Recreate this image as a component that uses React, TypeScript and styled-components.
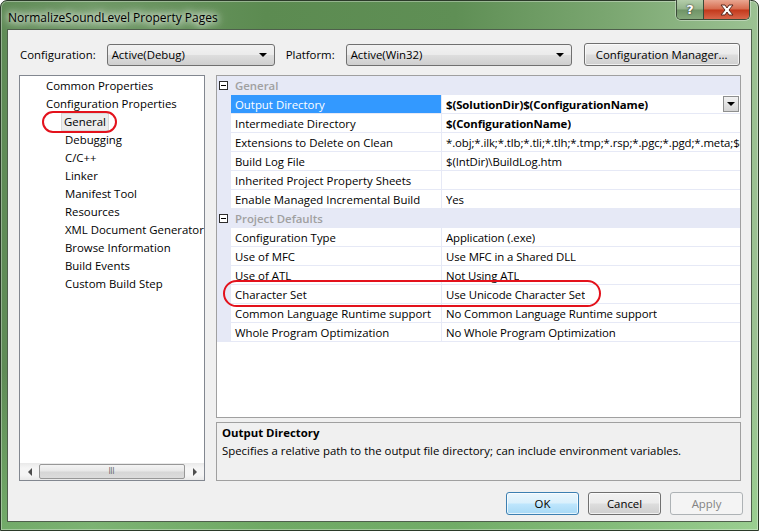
import React from 'react'
import styled, { createGlobalStyle } from 'styled-components'

const GlobalStyle = createGlobalStyle`
  body {
    margin: 0;
    background: #ffffff;
    font-family: "Open Sans", "Noto Sans", sans-serif;
    font-size: 11.4px;
    color: #000;
  }
`

const treeItems: { label: string; level: number; selected?: boolean }[] = [
  { label: 'Common Properties', level: 0 },
  { label: 'Configuration Properties', level: 0 },
  { label: 'General', level: 1, selected: true },
  { label: 'Debugging', level: 1 },
  { label: 'C/C++', level: 1 },
  { label: 'Linker', level: 1 },
  { label: 'Manifest Tool', level: 1 },
  { label: 'Resources', level: 1 },
  { label: 'XML Document Generator', level: 1 },
  { label: 'Browse Information', level: 1 },
  { label: 'Build Events', level: 1 },
  { label: 'Custom Build Step', level: 1 },
]

type Prop = { name: string; value: string; bold?: boolean; selected?: boolean }

const groups: { title: string; props: Prop[] }[] = [
  {
    title: 'General',
    props: [
      { name: 'Output Directory', value: '$(SolutionDir)$(ConfigurationName)', bold: true, selected: true },
      { name: 'Intermediate Directory', value: '$(ConfigurationName)', bold: true },
      { name: 'Extensions to Delete on Clean', value: '*.obj;*.ilk;*.tlb;*.tli;*.tlh;*.tmp;*.rsp;*.pgc;*.pgd;*.meta;$(' },
      { name: 'Build Log File', value: '$(IntDir)\\BuildLog.htm' },
      { name: 'Inherited Project Property Sheets', value: '' },
      { name: 'Enable Managed Incremental Build', value: 'Yes' },
    ],
  },
  {
    title: 'Project Defaults',
    props: [
      { name: 'Configuration Type', value: 'Application (.exe)' },
      { name: 'Use of MFC', value: 'Use MFC in a Shared DLL' },
      { name: 'Use of ATL', value: 'Not Using ATL' },
      { name: 'Character Set', value: 'Use Unicode Character Set' },
      { name: 'Common Language Runtime support', value: 'No Common Language Runtime support' },
      { name: 'Whole Program Optimization', value: 'No Whole Program Optimization' },
    ],
  },
]

function App() {
  return (
    <>
      <GlobalStyle />
      <Window>
        <TitleBar>
          <Title>NormalizeSoundLevel Property Pages</Title>
          <CaptionButtons>
            <CaptionButton kind="help">?</CaptionButton>
            <CaptionButton kind="close">
              <svg width="16" height="12" viewBox="0 0 16 12">
                <path d="M2 1 H6 L8 4 L10 1 H14 L10 6 L14 11 H10 L8 8 L6 11 H2 L6 6 Z" fill="#fff" stroke="#5a2a20" strokeWidth="1" />
              </svg>
            </CaptionButton>
          </CaptionButtons>
        </TitleBar>

        <Client>
          <Toolbar>
            <Label>Configuration:</Label>
            <Combo width={168}>
              Active(Debug)
              <Arrow />
            </Combo>
            <Label gap={11}>Platform:</Label>
            <Combo width={226}>
              Active(Win32)
              <Arrow />
            </Combo>
            <ManagerButton width={156}>Configuration Manager...</ManagerButton>
          </Toolbar>

          <Main>
            <Tree>
              <TreeList>
                {treeItems.map((item) => (
                  <TreeItem key={item.label} level={item.level}>
                    <TreeText selected={item.selected}>{item.label}</TreeText>
                  </TreeItem>
                ))}
              </TreeList>
              <HScroll>
                <ScrollArrow dir="left" />
                <Thumb>
                  <Grip>III</Grip>
                </Thumb>
                <ScrollArrow dir="right" />
              </HScroll>
              <Mark left={22} top={35} w={75} h={22} />
            </Tree>

            <RightColumn>
              <Grid>
                {groups.map((g) => (
                  <React.Fragment key={g.title}>
                    <CategoryRow>
                      <Gutter>
                        <MinusBox />
                      </Gutter>
                      <CategoryText>{g.title}</CategoryText>
                    </CategoryRow>
                    {g.props.map((p) => (
                      <PropRow key={p.name}>
                        <Gutter />
                        <NameCell selected={p.selected}>{p.name}</NameCell>
                        <ValueCell bold={p.bold}>
                          <ValueText>{p.value}</ValueText>
                          {p.selected && (
                            <DropButton>
                              <Arrow />
                            </DropButton>
                          )}
                        </ValueCell>
                      </PropRow>
                    ))}
                  </React.Fragment>
                ))}
                <Mark left={6} top={204} w={378} h={27} />
              </Grid>
              <Description>
                <DescTitle>Output Directory</DescTitle>
                <DescText>Specifies a relative path to the output file directory; can include environment variables.</DescText>
              </Description>
            </RightColumn>
          </Main>

          <ButtonRow>
            <PushButton width={73} variant="default">OK</PushButton>
            <PushButton width={73}>Cancel</PushButton>
            <PushButton width={73} variant="disabled">Apply</PushButton>
          </ButtonRow>
        </Client>
      </Window>
    </>
  )
}

export default App

const Window = styled.div`
  position: relative;
  box-sizing: border-box;
  width: 759px;
  height: 531px;
  display: flex;
  flex-direction: column;
  padding: 0 6px 8px 6px;
  border: 1px solid #2b3a29;
  border-radius: 7px 7px 0 0;
  background:
    linear-gradient(180deg, rgba(255, 255, 255, 0) 0%, rgba(255, 255, 255, 0) 70%, rgba(150, 230, 140, 0.35) 100%),
    linear-gradient(90deg, #5f8b56 0%, #6f9966 12%, #5c8b51 35%, #5f8f55 60%, #7aa670 80%, #9cc293 100%);
  box-shadow: inset 0 0 0 1px rgba(255, 255, 255, 0.35);
`

const TitleBar = styled.div`
  height: 28px;
  display: flex;
  align-items: flex-start;
`

const Title = styled.div`
  margin: 8px 0 0 1px;
  font-size: 12px;
  color: #000;
  text-shadow: 0 0 6px #fff, 0 0 10px #fff, 0 0 14px rgba(255, 255, 255, 0.9);
`

const CaptionButtons = styled.div`
  margin: -1px 2px 0 auto;
  display: flex;
  border: 1px solid #3a4a38;
  border-top: none;
  border-radius: 0 0 5px 5px;
  overflow: hidden;
  box-shadow: 0 0 0 1px rgba(255, 255, 255, 0.35);
`

const CaptionButton = styled.div<{ kind: 'help' | 'close' }>`
  height: 19px;
  width: ${(p) => (p.kind === 'help' ? 26 : 45)}px;
  display: flex;
  align-items: center;
  justify-content: center;
  font-family: "DejaVu Sans", sans-serif;
  font-weight: bold;
  font-size: 13px;
  color: #fff;
  text-shadow: 0 0 2px #333, 0 0 1px #333;
  background: ${(p) =>
    p.kind === 'help'
      ? 'linear-gradient(180deg, #b3cdaa 0%, #93b38a 48%, #6f9366 52%, #86a97c 100%)'
      : 'linear-gradient(180deg, #e9a791 0%, #d66a4d 48%, #c2381b 52%, #d8664a 100%)'};
  border-left: ${(p) => (p.kind === 'close' ? '1px solid #3a4a38' : 'none')};
`

const Client = styled.div`
  flex: 1;
  min-width: 0;
  box-sizing: border-box;
  display: flex;
  flex-direction: column;
  padding: 13px 10px 6px 11px;
  background: #f0f0f0;
  border: 1px solid #4f604c;
`

const Toolbar = styled.div`
  display: flex;
  align-items: center;
  height: 23px;
`

const Label = styled.span<{ gap?: number }>`
  margin-left: ${(p) => (p.gap ?? 1)}px;
  margin-right: 11px;
`

const Combo = styled.div<{ width: number }>`
  position: relative;
  box-sizing: border-box;
  width: ${(p) => p.width}px;
  height: 22px;
  display: flex;
  align-items: center;
  padding-left: 4px;
  border: 1px solid #707070;
  border-radius: 3px;
  background: linear-gradient(180deg, #f2f2f2 0%, #ebebeb 48%, #dddddd 52%, #cfcfcf 100%);

  & > span {
    position: absolute;
    right: 7px;
    top: 8px;
  }
`

const Arrow = styled.span`
  display: block;
  width: 0;
  height: 0;
  border-left: 4px solid transparent;
  border-right: 4px solid transparent;
  border-top: 4px solid #000;
`

const PushButton = styled.div<{ width: number; variant?: 'default' | 'disabled' }>`
  box-sizing: border-box;
  width: ${(p) => p.width}px;
  height: 23px;
  display: flex;
  align-items: center;
  justify-content: center;
  border-radius: 3px;
  border: 1px solid ${(p) => (p.variant === 'default' ? '#3c7fb1' : p.variant === 'disabled' ? '#adb2b5' : '#707070')};
  color: ${(p) => (p.variant === 'disabled' ? '#838383' : '#000')};
  background: ${(p) =>
    p.variant === 'default'
      ? 'linear-gradient(180deg, #eaf6fd 0%, #d9f0fc 48%, #bee6fd 52%, #a7d9f5 100%)'
      : p.variant === 'disabled'
        ? '#f4f4f4'
        : 'linear-gradient(180deg, #f2f2f2 0%, #ebebeb 48%, #dddddd 52%, #cfcfcf 100%)'};
  box-shadow: inset 0 0 0 1px ${(p) => (p.variant === 'disabled' ? 'transparent' : 'rgba(255,255,255,0.7)')};
`

const ManagerButton = styled(PushButton)`
  margin-left: 12px;
`

const Main = styled.div`
  margin-top: 9px;
  height: 406px;
  display: flex;
  gap: 11px;
  min-width: 0;
`

const Tree = styled.div`
  position: relative;
  box-sizing: border-box;
  width: 186px;
  flex-shrink: 0;
  display: flex;
  flex-direction: column;
  background: #fff;
  border: 1px solid #828790;
`

const TreeList = styled.div`
  flex: 1;
  padding-top: 1px;
  overflow: hidden;
`

const TreeItem = styled.div<{ level: number }>`
  height: 18px;
  display: flex;
  align-items: center;
  padding-left: ${(p) => 22 + p.level * 19}px;
  white-space: nowrap;
`

const TreeText = styled.span<{ selected?: boolean }>`
  padding: 0 ${(p) => (p.selected ? 2 : 3)}px;
  line-height: 16px;
  border: 1px solid ${(p) => (p.selected ? '#d9d9d9' : 'transparent')};
  background: ${(p) => (p.selected ? '#ececec' : 'transparent')};
`

const HScroll = styled.div`
  height: 17px;
  display: flex;
  align-items: center;
  background: linear-gradient(180deg, #e9e9e9 0%, #f5f5f5 30%, #f5f5f5 70%, #e9e9e9 100%);
`

const ScrollArrow = styled.span<{ dir: 'left' | 'right' }>`
  width: 19px;
  height: 17px;
  display: flex;
  align-items: center;
  justify-content: center;

  &::before {
    content: '';
    width: 0;
    height: 0;
    border-top: 4px solid transparent;
    border-bottom: 4px solid transparent;
    ${(p) => (p.dir === 'left' ? 'border-right: 4px solid #4d4d4d;' : 'border-left: 4px solid #4d4d4d;')}
  }
`

const Thumb = styled.div`
  flex: 1;
  box-sizing: border-box;
  height: 15px;
  display: flex;
  align-items: center;
  justify-content: center;
  border: 1px solid #979797;
  border-radius: 2px;
  background: linear-gradient(180deg, #f4f4f4 0%, #e8e8e8 45%, #d6d6d6 55%, #dcdcdc 100%);
`

const Grip = styled.span`
  font-family: "DejaVu Sans", sans-serif;
  font-size: 8px;
  color: #5a5a5a;
  transform: scaleX(0.8);
`

const Mark = styled.div<{ left: number; top: number; w: number; h: number }>`
  position: absolute;
  left: ${(p) => p.left}px;
  top: ${(p) => p.top}px;
  width: ${(p) => p.w}px;
  height: ${(p) => p.h}px;
  box-sizing: border-box;
  border: 2.5px solid #e3121c;
  border-radius: ${(p) => p.h / 2}px;
  pointer-events: none;
`

const RightColumn = styled.div`
  flex: 1;
  min-width: 0;
  display: flex;
  flex-direction: column;
  gap: 4px;
`

const Grid = styled.div`
  position: relative;
  box-sizing: border-box;
  height: 343px;
  background: #fff;
  border: 1px solid #a0a0a0;
  overflow: hidden;
`

const CategoryRow = styled.div`
  height: 19px;
  display: flex;
  align-items: center;
  background: #e6e9f6;
`

const PropRow = styled.div`
  height: 19px;
  display: flex;
  min-width: 0;
`

const Gutter = styled.div`
  width: 14px;
  height: 100%;
  flex-shrink: 0;
  display: flex;
  align-items: center;
  background: #e6e9f6;
`

const MinusBox = styled.span`
  position: relative;
  box-sizing: border-box;
  margin-left: 2px;
  width: 9px;
  height: 9px;
  border: 1px solid #2d2d2d;
  background: #fff;

  &::after {
    content: '';
    position: absolute;
    left: 1px;
    top: 3px;
    width: 5px;
    height: 1px;
    background: #000;
  }
`

const CategoryText = styled.span`
  padding-left: 4px;
  font-weight: 600;
  color: #a0a0a0;
`

const NameCell = styled.div<{ selected?: boolean }>`
  box-sizing: border-box;
  width: 211px;
  flex-shrink: 0;
  height: 19px;
  display: flex;
  align-items: center;
  padding-left: 4px;
  white-space: nowrap;
  overflow: hidden;
  border-bottom: 1px solid #e6e9f6;
  border-right: 1px solid #e6e9f6;
  background: ${(p) => (p.selected ? '#3399ff' : '#fff')};
  color: ${(p) => (p.selected ? '#fff' : '#000')};
`

const ValueCell = styled.div<{ bold?: boolean }>`
  position: relative;
  box-sizing: border-box;
  flex: 1;
  min-width: 0;
  height: 19px;
  display: flex;
  align-items: center;
  padding-left: 4px;
  overflow: hidden;
  border-bottom: 1px solid #e6e9f6;
  font-weight: ${(p) => (p.bold ? 700 : 400)};
`

const ValueText = styled.span`
  white-space: nowrap;
  overflow: hidden;
  letter-spacing: -0.1px;
`

const DropButton = styled.div`
  position: absolute;
  right: 1px;
  top: 1px;
  box-sizing: border-box;
  width: 16px;
  height: 16px;
  display: flex;
  align-items: center;
  justify-content: center;
  border: 1px solid #8e8f8f;
  background: linear-gradient(180deg, #f2f2f2 0%, #e3e3e3 50%, #d4d4d4 100%);
`

const Description = styled.div`
  flex: 1;
  box-sizing: border-box;
  padding: 1px 5px;
  background: #f0f0f0;
  border: 1px solid #a0a0a0;
`

const DescTitle = styled.div`
  font-weight: 700;
  line-height: 18px;
`

const DescText = styled.div`
  line-height: 18px;
`

const ButtonRow = styled.div`
  margin: 11px -2px 0 0;
  display: flex;
  justify-content: flex-end;
  gap: 9px;
`
